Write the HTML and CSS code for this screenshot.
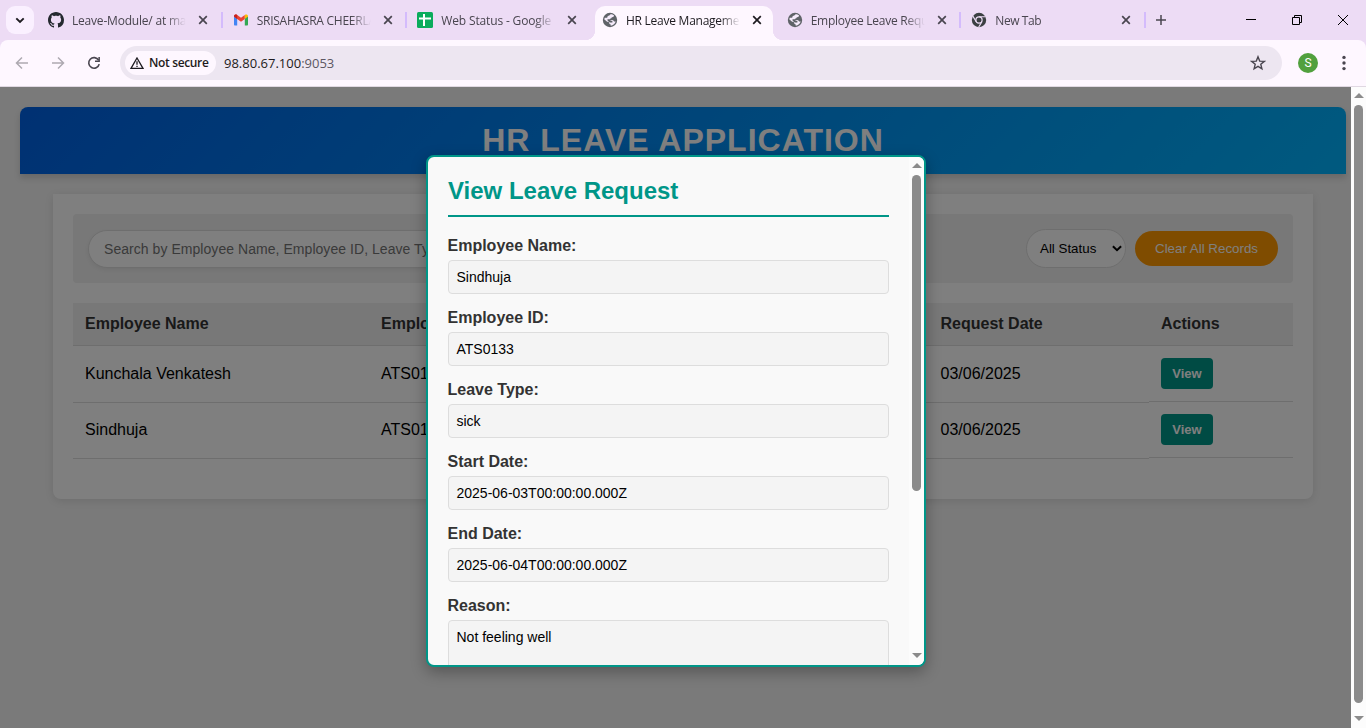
FILE: index.html
```html
<!DOCTYPE html>
<html lang="en">
<head>
<meta charset="utf-8">
<title>HR Leave Management</title>
<link rel="stylesheet" href="styles.css">
</head>
<body>
<svg class="defs" width="0" height="0">
  <symbol id="x" viewBox="0 0 10 10"><path d="M1.2 1.2l7.6 7.6M8.8 1.2l-7.6 7.6" fill="none" stroke="currentColor" stroke-width="1.7"/></symbol>
  <symbol id="globe" viewBox="0 0 16 16"><circle cx="8" cy="8" r="7.200" fill="#5f6368"/><path d="M8.600 2.300C10 2.300 11.200 2.800 12.100 3.600c-.2 1-.9 1.500-1.900 1.600-1 .1-.7 1.300-1.700 1.400-.8.100-.9.900-.3 1.300h2.100c1.300 0 1.300 1.700 2.600 1.700h.8c-.6 2.100-2.500 3.900-5 4.100v-1.200c-.9-.1-1.500-.8-1.500-1.700 0-.5-.4-.8-.9-.8C4.700 10 4.200 8.900 3.200 8.100l-.9-.6c.1-.7.3-1.300.5-1.800h1.700c.6 0 1-.4 1-1 0-.5.4-.9.900-.9.900 0 1.400-.7 2.200-1.500z" fill="#f5ebfb"/><path d="M5.400 7.300h2.400l1 1.500h1.600v1.700H7.900L5.800 9z" fill="#5f6368"/></symbol>
</svg>
<div class="browser">
  <div class="tabstrip">
    <div class="tabsearch"><svg width="10" height="7" viewBox="0 0 10 7"><path d="M1.300 1.300L5 5l3.700-3.700" fill="none" stroke="#1d1b20" stroke-width="1.900"/></svg></div>
    <div class="tabs">
      <div class="tab sep">
        <svg class="fav" viewBox="0 0 16 16"><path fill="#24292f" d="M8 0C3.580 0 0 3.580 0 8c0 3.540 2.290 6.530 5.470 7.590.4.070.55-.17.55-.38 0-.19-.01-.82-.01-1.490-2.010.37-2.530-.49-2.690-.94-.09-.23-.48-.94-.82-1.130-.28-.15-.68-.52-.01-.53.63-.01 1.080.58 1.230.82.72 1.210 1.870.87 2.330.66.070-.52.280-.87.510-1.070-1.780-.2-3.640-.89-3.640-3.950 0-.87.310-1.590.82-2.150-.08-.2-.36-1.020.08-2.120 0 0 .67-.21 2.200.82.64-.18 1.320-.27 2-.27s1.360.09 2 .27c1.530-1.040 2.200-.82 2.200-.82.44 1.100.16 1.920.08 2.120.51.56.82 1.270.82 2.150 0 3.070-1.870 3.750-3.650 3.950.29.25.54.73.54 1.480 0 1.070-.01 1.930-.01 2.200 0 .21.15.46.55.38A8.010 8.010 0 0 0 16 8c0-4.420-3.580-8-8-8z"/></svg>
        <span class="ttl t1">Leave-Module/ at mai</span><svg class="x"><use href="#x"/></svg></div>
      <div class="tab sep">
        <svg class="fav" viewBox="0 0 16 16"><path fill="#4285f4" d="M1 4v8.500c0 .5.400 1 1 1h2.200V6z"/><path fill="#34a853" d="M11.800 6v7.500H14c.6 0 1-.5 1-1V4z"/><path fill="#ea4335" d="M1 4.200C1 2.500 2.900 2 4.200 2.900L8 5.800l3.800-2.900v4L8 9.800 4.200 6.900 1 4.500z"/><path fill="#fbbc04" d="M11.800 2.900C13.100 2 15 2.500 15 4.200v.3l-3.200 2.400z"/><path fill="#c5221f" d="M1 4.200C1 2.500 2.900 2 4.200 2.900v4L1 4.500z"/></svg>
        <span class="ttl t2">SRISAHASRA CHEERLA</span><svg class="x"><use href="#x"/></svg></div>
      <div class="tab">
        <svg class="fav" viewBox="0 0 16 16"><rect width="16" height="16" rx="1.500" fill="#0aac5c"/><path d="M2 6.400h12M7 2v12" stroke="#fff" stroke-width="2"/></svg>
        <span class="ttl t3">Web Status - Google S</span><svg class="x"><use href="#x"/></svg></div>
      <div class="tab active">
        <svg class="fav"><use href="#globe"/></svg>
        <span class="ttl t4">HR Leave Managemer</span><svg class="x"><use href="#x"/></svg></div>
      <div class="tab sep">
        <svg class="fav"><use href="#globe"/></svg>
        <span class="ttl t5">Employee Leave Requ</span><svg class="x"><use href="#x"/></svg></div>
      <div class="tab sep">
        <svg class="fav" viewBox="0 0 16 16"><circle cx="8" cy="8" r="7.200" fill="#3c4043"/><circle cx="8" cy="8" r="3.100" fill="#3c4043" stroke="#eddcf5" stroke-width="1.200"/><path d="M8 4.700h6.500M5.200 9.700L1.900 4.100M10.900 9.600L7.600 15.200" stroke="#eddcf5" stroke-width="1.100"/></svg>
        <span class="ttl t6">New Tab</span><svg class="x"><use href="#x"/></svg></div>
    </div>
    <svg class="plus" width="12" height="12" viewBox="0 0 12 12"><path d="M6 1v10M1 6h10" stroke="#49454f" stroke-width="1.500"/></svg>
    <div class="winbtns">
      <svg width="12" height="12" viewBox="0 0 12 12"><path d="M1 5.500h10" stroke="#000"/></svg>
      <svg width="12" height="12" viewBox="0 0 12 12"><path d="M1.500 3.500h7v7h-7zM3.500 3.500v-2h7v7h-2" fill="none" stroke="#000"/></svg>
      <svg width="12" height="12" viewBox="0 0 12 12"><path d="M1 1l10 10M11 1L1 11" stroke="#000"/></svg>
    </div>
  </div>
  <div class="toolbar">
    <div class="nav">
      <svg width="14" height="14" viewBox="0 0 14 14"><path d="M13 7H1.500M7 1.500L1.500 7 7 12.500" fill="none" stroke="#aea9b1" stroke-width="1.500"/></svg>
      <svg width="14" height="14" viewBox="0 0 14 14"><path d="M1 7h11.500M7 1.500L12.500 7 7 12.500" fill="none" stroke="#aea9b1" stroke-width="1.500"/></svg>
      <svg width="14" height="14" viewBox="0 0 14 14"><path d="M11.600 4.200A5.300 5.300 0 1 0 12.200 8.100" fill="none" stroke="#49454f" stroke-width="1.600"/><path d="M12.900 1v5H8V4.500h3.400V1z" fill="#49454f"/></svg>
    </div>
    <div class="omnibox">
      <div class="chip">
        <svg width="14" height="12" viewBox="0 0 14 12"><path d="M7 1L13 11.300H1z" fill="none" stroke="#1d1b20" stroke-width="1.300"/><path d="M7 4.200v3.600M7 8.700v1.300" stroke="#1d1b20" stroke-width="1.300"/></svg>
        <span>Not secure</span>
      </div>
      <span class="url">98.80.67.100<i>:9053</i></span>
      <svg class="star" width="16" height="16" viewBox="0 0 16 16"><path d="M8 1.800l1.700 4.300 4.600.3-3.500 2.900 1.100 4.500L8 11.300l-3.900 2.500 1.100-4.500L1.700 6.400l4.600-.3z" fill="none" stroke="#49454f" stroke-width="1.400"/></svg>
    </div>
    <div class="avatar">S</div>
    <svg class="dots" width="4" height="16" viewBox="0 0 4 16"><g fill="#49454f"><circle cx="2" cy="2.400" r="1.700"/><circle cx="2" cy="8" r="1.700"/><circle cx="2" cy="13.600" r="1.700"/></g></svg>
  </div>
</div>

<div class="viewport">
  <div class="page">
    <header class="header"><h1>HR LEAVE APPLICATION</h1></header>
    <main class="card">
      <div class="filters">
        <div class="search">Search by Employee Name, Employee ID, Leave Ty</div>
        <div class="select"><span>All Status</span><svg width="10" height="7" viewBox="0 0 10 7"><path d="M.9 1.200L5 5.200l4.100-4" fill="none" stroke="#000" stroke-width="2"/></svg></div>
        <div class="clear">Clear All Records</div>
      </div>
      <div class="table">
        <div class="tr head"><div>Employee Name</div><div>Employee ID</div><div></div><div>Request Date</div><div>Actions</div></div>
        <div class="tr first"><div>Kunchala Venkatesh</div><div>ATS0134</div><div></div><div>03/06/2025</div><div class="act"><b class="view">View</b></div></div>
        <div class="tr"><div>Sindhuja</div><div>ATS0133</div><div></div><div>03/06/2025</div><div class="act"><b class="view">View</b></div></div>
      </div>
    </main>
    <div class="overlay"></div>
    <section class="modal">
      <div class="body">
        <h2><span>View Leave Request</span></h2>
        <label>Employee Name:</label><div class="field">Sindhuja</div>
        <label>Employee ID:</label><div class="field">ATS0133</div>
        <label>Leave Type:</label><div class="field">sick</div>
        <label>Start Date:</label><div class="field">2025-06-03T00:00:00.000Z</div>
        <label>End Date:</label><div class="field">2025-06-04T00:00:00.000Z</div>
        <label>Reason:</label><div class="field area">Not feeling well</div>
      </div>
      <div class="scroll inner"><i class="up"></i><i class="thumb"></i><i class="down"></i></div>
    </section>
  </div>
  <div class="scroll outer"><i class="up"></i><i class="thumb"></i><i class="down"></i></div>
</div>
</body>
</html>
```
FILE: styles.css
```css
* { box-sizing: border-box; }
body { margin: 0; width: 1366px; height: 728px; overflow: hidden; display: flex; flex-direction: column; font-family: "Liberation Sans", Arial, sans-serif; }
svg { display: block; flex: none; }
.defs { position: absolute; }

/* Browser chrome */
.browser { height: 87px; flex: none; background: #eddcf5; font-family: "Open Sans", "Noto Sans", sans-serif; }
.tabstrip { height: 40px; display: flex; align-items: center; padding-left: 6px; color: #49454f; }
.tabsearch { width: 28px; height: 28px; border-radius: 9px; background: #faf0ff; display: flex; align-items: center; justify-content: center; margin-right: 5px; }
.tabs { display: flex; height: 34px; align-self: flex-end; width: 1108px; }
.tab { width: 184.660px; padding: 0 0 6px 9px; display: flex; align-items: center; position: relative; }
.tab.sep::after { content: ""; position: absolute; right: 1px; top: 6px; width: 2px; height: 16px; background: #d4bbfc; }
.fav { width: 16px; height: 16px; }
.ttl { margin-left: 8px; width: 115px; overflow: hidden; white-space: nowrap; font-size: 12px; line-height: 18px; padding-top: 1px; -webkit-mask-image: linear-gradient(90deg, #000 82%, transparent 99%); mask-image: linear-gradient(90deg, #000 82%, transparent 99%); }
.t1 { letter-spacing: -.2px; }
.t2 { letter-spacing: -.25px; }
.t3 { letter-spacing: -.15px; }
.t4 { letter-spacing: -.25px; }
.t5 { letter-spacing: -.25px; }
.t6 { letter-spacing: -.4px; }
.x { width: 10px; height: 10px; margin-left: 11px; }
.active { color: #1d1b20; }
.active::before { content: ""; position: absolute; z-index: 0; left: 2px; right: 5px; top: 0; bottom: 0; border-radius: 10px 10px 0 0; background: #fef7ff; }
.active > * { position: relative; }
.active::after { content: ""; position: absolute; left: -8px; right: -5px; bottom: 0; height: 10px; background: radial-gradient(circle at 0 0, transparent 10px, #fef7ff 10.500px) 0 0 / 10px 10px no-repeat, radial-gradient(circle at 100% 0, transparent 10px, #fef7ff 10.500px) 100% 0 / 10px 10px no-repeat; }
.plus { margin-left: 8px; }
.winbtns { margin-left: auto; display: flex; gap: 34px; padding-right: 17px; }
.toolbar { height: 47px; background: #fef7ff; border-radius: 8px 8px 0 0; border-bottom: 1px solid #e0d8e2; display: flex; align-items: center; padding: 0 20px 1px 15px; }
.nav { display: flex; gap: 22px; margin-right: 19px; }
.omnibox { width: 1162px; height: 34px; border-radius: 17px; background: #ede6f1; padding: 0 16px 0 5px; display: flex; align-items: center; color: #1d1b20; }
.chip { width: 91px; height: 24px; border-radius: 12px; background: #fef7ff; display: flex; align-items: center; padding-left: 5px; gap: 5px; font-size: 12px; font-weight: 600; white-space: nowrap; }
.chip span { letter-spacing: -.35px; }
.url { margin-left: 8px; font-size: 13px; letter-spacing: 0; }
.url i { font-style: normal; color: #5c5762; }
.star { margin-left: auto; }
.avatar { margin-left: 16px; width: 20px; height: 20px; border-radius: 50%; background: #51a03e; color: #fff; font: 12px/20px Roboto, sans-serif; text-align: center; }
.dots { margin-left: 24px; }

/* Page */
.viewport { flex: 1; display: flex; min-height: 0; }
.page { width: 1351px; position: relative; background: #f4f4f4; padding: 20px 5px 0 20px; }
.header { height: 67px; border-radius: 8px 8px 0 0; background: linear-gradient(135deg, #0062e6, #00b4ff); box-shadow: 0 4px 6px rgba(0,0,0,.15); }
h1 { margin: 0; text-align: center; color: #fff; font-size: 32px; line-height: 66px; letter-spacing: 1px; }
.card { width: 1260px; height: 305px; margin: 20px 0 0 33px; padding: 20px; background: #fff; border-radius: 0 0 8px 8px; box-shadow: 0 2px 8px rgba(0,0,0,.1); }
.filters { height: 69px; background: #f0f0f0; border-radius: 4px; padding: 0 15px; display: flex; align-items: center; }
.search { width: 400px; height: 38px; border: 1px solid #ddd; border-radius: 19px; background: #fff; padding-left: 15px; font-size: 14px; letter-spacing: .05px; line-height: 37px; color: #757575; white-space: nowrap; overflow: hidden; box-shadow: 0 2px 4px rgba(0,0,0,.06); }
.select { margin-left: auto; width: 100px; height: 39px; border: 1px solid #ddd; border-radius: 20px; background: #fff; display: flex; align-items: center; justify-content: space-between; padding: 0 3px 0 13px; font-size: 13.333px; }
.clear { margin-left: 9px; width: 143px; height: 35px; border-radius: 18px; background: #ff9800; color: #fff; text-align: center; font-size: 13.333px; line-height: 35px; }
.table { margin-top: 20px; font-size: 16px; }
.tr { display: grid; grid-template-columns: 296px 200px 359.500px 220.500px 144px; height: 56px; }
.tr > div { padding-left: 12px; line-height: 54px; border-bottom: 1px solid #ddd; white-space: nowrap; }
.tr.head { height: 43px; background: #f0f0f0; font-weight: bold; color: #333; }
.tr.head > div { line-height: 41px; }
.tr.first { height: 57px; }
.tr.first > div { line-height: 56px; }
.tr > .act { margin-bottom: 1px; padding-top: 11px; }
.tr.first > .act { padding-top: 12px; }
.view { display: block; width: 52px; height: 31px; border-radius: 4px; background: #009688; color: #fff; font-size: 13px; line-height: 31px; text-align: center; }
.overlay { position: absolute; inset: 0; background: rgba(0,0,0,.5); }

/* Dialog */
.modal { position: absolute; left: 426px; top: 68px; width: 500px; height: 512px; border: 2px solid #009688; border-radius: 8px; background: #f9f9f9; box-shadow: 0 5px 15px rgba(0,0,0,.3); display: flex; overflow: hidden; }
.body { flex: 1; padding: 20px; overflow: hidden; }
h2 { margin: 0 0 16px; height: 40px; border-bottom: 2px solid #009688; color: #009688; font-size: 24px; line-height: 28px; }
label { display: block; font-weight: bold; font-size: 16px; line-height: 18px; height: 27px; padding-top: 4px; color: #333; margin-left: -.5px; }
.field { height: 34px; margin-bottom: 11px; border: 1px solid #ddd; border-radius: 4px; background: #f4f4f4; padding-left: 7.500px; font-size: 14px; line-height: 32px; }
.field.area { height: 80px; }
.scroll { width: 15px; background: #fcfcfc; display: flex; flex-direction: column; align-items: center; padding: 6px 0 7px; }
.up { border: 5px solid transparent; border-top: 0; border-bottom: 5px solid #8b8b8b; }
.down { margin-top: auto; border: 5px solid transparent; border-bottom: 0; border-top: 5px solid #8b8b8b; }
.thumb { width: 9px; height: 316px; margin-top: 7px; border-radius: 5px; background: #8b8b8b; }
.outer .thumb { height: 598px; }
```
